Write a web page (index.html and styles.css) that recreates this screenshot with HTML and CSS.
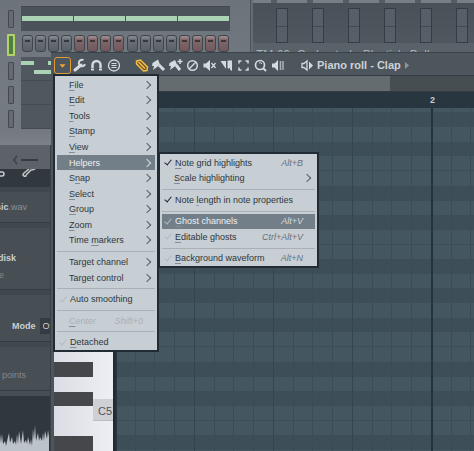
FILE: index.html
```html
<!DOCTYPE html>
<html lang="en">
<head>
<meta charset="utf-8">
<title>Piano roll - Clap</title>
<link rel="stylesheet" href="styles.css">
</head>
<body>
<main class="desktop">
  <section class="rack" aria-label="Channel rack">
    <div class="leds"><i></i><i class="on"></i><i></i><i></i><i></i></div>
    <div class="channels">
      <div class="preview"><b></b><b></b><b></b><b></b></div>
      <div class="steps">
        <i></i><i></i><i></i><i></i><i class="red"></i><i class="red"></i><i class="red"></i><i class="red"></i>
        <i></i><i></i><i></i><i></i><i class="red"></i><i class="red"></i><i class="red"></i><i class="red"></i>
      </div>
      <div class="lane notes">
        <svg width="60" height="23"><path d="M0 4h13v4H0zM27 4h13v4H27zM13 13h20v4H13z" fill="#a9d3b4"/></svg>
      </div>
      <div class="lane"></div>
      <div class="lane"></div>
    </div>
  </section>

  <section class="mixer" aria-label="Mixer">
    <div class="ruler-top"></div>
    <div class="faders"><i></i><i></i><i></i><i></i><i></i><i></i></div>
    <p class="route">TM 60 &nbsp;Orchestral - Plastic's Ballroom</p>
  </section>

  <section class="sampler" aria-label="Channel settings">
    <div class="scroller"><svg width="30" height="10"><path d="M5 1L2 5l3 4" fill="none" stroke="#3b4147" stroke-width="1.5"/><path d="M9 5h17" stroke="#353b40" stroke-width="2"/></svg></div>
    <div class="tabs">
      <svg width="50" height="18" fill="none" stroke="#c5cacf" stroke-width="1.5"><path d="M-2 3h4q2 0 2 2t-2 2h-4M24 4l5-4M26 6l5-5q3 0 5-2M24 4q-2 2 0 3t2-1"/></svg>
    </div>
    <div class="block file"><span><strong>music</strong>.wav</span></div>
    <div class="block options"><strong>Keep on disk</strong><span>Resample</span></div>
    <div class="block mode"><label for="mode">Mode</label><select id="mode"><option>Off</option></select></div>
    <div class="block points"><span>points</span></div>
    <svg class="wave" viewBox="0 0 50 55" preserveAspectRatio="none"><path d="M0 38l1 9 1-9 1 10 2-3 1 5 2-9 1-4 1 10 2-6 1 7 2-3 1 4 1-11 1 10 1-13 2 13 2-14 1 13 2-3 1 4 1-7 2 8 1-6 1 7 1-17 1 11 1-15 1 16 2-8 1 8 1-4 2 4 1-8 1 8 1-10 2 8 1-9 1 7V55H0z" fill="#bdc4c9"/></svg>
  </section>

  <section class="roll" aria-label="Piano roll">
    <header class="toolbar">
      <button class="tool open" aria-label="Menu"><svg viewBox="0 0 17 17"><path d="M5 7h7l-3.500 4z" fill="#f3a32f"/></svg></button>
      <button class="tool" aria-label="Tools"><svg viewBox="0 0 17 17"><path d="M4 13l6-5" stroke="#d4dade" stroke-width="3" stroke-linecap="round"/><path d="M12.500 3.200A3.200 3.200 0 1 0 14 7.200" fill="none" stroke="#d4dade" stroke-width="2"/></svg></button>
      <button class="tool" aria-label="Snap"><svg viewBox="0 0 17 17"><path d="M4.500 11V8a4 4 0 0 1 8 0v3" fill="none" stroke="#d4dade" stroke-width="2.500"/><path d="M3 12.500h3M11 12.500h3" stroke="#d4dade" stroke-width="2"/></svg></button>
      <button class="tool" aria-label="Stamp"><svg viewBox="0 0 17 17" fill="none" stroke="#d4dade"><circle cx="9" cy="8.500" r="5.500" stroke-width="1.300"/><path d="M6.500 6.500h5M6.500 8.500h5M6.500 10.500h5"/></svg></button>
      <button class="tool draw" aria-label="Draw"><svg viewBox="0 0 17 17"><path d="M3.500 4l4-1 7 7-.5 3.500-3.500.5-7-7z" fill="#765c28" stroke="#f2be49" stroke-width="1.500"/><path d="M5.500 5l6.500 6.500" stroke="#f2be49" stroke-width="1.500"/></svg></button>
      <button class="tool" aria-label="Paint"><svg viewBox="0 0 17 17" fill="#d4dade"><path d="M2.500 6L8 2.500l2 5L7 10l-4 3 1-4-2 0z"/><path d="M9 8l5 5" stroke="#d4dade" stroke-width="3"/></svg></button>
      <button class="tool" aria-label="Paint drums"><svg viewBox="0 0 17 17" fill="#d4dade"><path d="M2.500 6L8 3l2 4.500L7 10l-4 3 1-4-2 0z"/><path d="M9 8l4 5" stroke="#d4dade" stroke-width="3"/><path d="M13 2v5M10.500 4.500h5" stroke="#d4dade" stroke-width="1.500"/></svg></button>
      <button class="tool" aria-label="Delete"><svg viewBox="0 0 17 17" fill="none" stroke="#d4dade" stroke-width="1.500"><circle cx="8.500" cy="8.500" r="4.800"/><path d="M5 12l7-7"/></svg></button>
      <button class="tool" aria-label="Mute"><svg viewBox="0 0 17 17"><path d="M2.500 6.500h2.500L9 3v11L5 10.500H2.500z" fill="#d4dade"/><path d="M10.500 6l4 5M14.500 6l-4 5" stroke="#d4dade" stroke-width="1.300"/></svg></button>
      <button class="tool" aria-label="Slice"><svg viewBox="0 0 17 17" fill="#d4dade"><path d="M2.500 4H8v8zM9.500 3.500H14V14L9.500 11z"/><path d="M11.500 11v2" stroke="#505860"/></svg></button>
      <button class="tool" aria-label="Select"><svg viewBox="0 0 17 17" fill="none" stroke="#d4dade" stroke-width="1.500"><path d="M6.500 4H4v2.500M10.500 4H13v2.500M4 10.500V13h2.500M13 10.500V13h-2.500"/></svg></button>
      <button class="tool" aria-label="Zoom"><svg viewBox="0 0 17 17" fill="none" stroke="#d4dade"><circle cx="8" cy="8" r="4.500" stroke-width="1.700"/><path d="M11 11l3 3" stroke-width="2"/><path d="M7 6q2-1 3 1"/></svg></button>
      <button class="tool" aria-label="Play selection"><svg viewBox="0 0 17 17"><path d="M3 6.500h2.500L9 3v11L5.500 10.500H3z" fill="#d4dade"/><path d="M11.500 4v9M14 4v9" stroke="#aab1b7" stroke-width="1.500"/></svg></button>
      <button class="tool listen" aria-label="Audition"><svg viewBox="0 0 17 17"><path d="M4 6.500h2L9 4v9L6 10.500H4z" fill="none" stroke="#d4dade" stroke-width="1.300"/><path d="M11 4.500L15 8.500l-4 4z" fill="#d4dade"/></svg></button>
      <h1>Piano roll - Clap</h1>
      <svg class="more" width="5" height="7"><path d="M0 0l4 3.500-4 3.500z" fill="#8f979d"/></svg>
    </header>
    <div class="scroll"><i></i></div>
    <div class="timeline"><span>2</span></div>
    <div class="editor">
      <div class="keys"><span>C5</span></div>
      <div class="grid"></div>
    </div>
  </section>

  <nav class="menu main" aria-label="Piano roll menu">
    <button class="sub"><span><u>F</u>ile</span></button>
    <button class="sub"><span><u>E</u>dit</span></button>
    <button class="sub"><span><u>T</u>ools</span></button>
    <button class="sub"><span><u>S</u>tamp</span></button>
    <button class="sub"><span><u>V</u>iew</span></button>
    <button class="sub active"><span><u>H</u>elpers</span></button>
    <button class="sub"><span>S<u>n</u>ap</span></button>
    <button class="sub"><span><u>S</u>elect</span></button>
    <button class="sub"><span><u>G</u>roup</span></button>
    <button class="sub"><span><u>Z</u>oom</span></button>
    <button class="sub"><span>Time <u>m</u>arkers</span></button>
    <hr>
    <button class="sub"><span>Target channel</span></button>
    <button class="sub"><span>Target control</span></button>
    <hr>
    <button class="check"><span>Auto smoothing</span></button>
    <hr>
    <button disabled><span><u>C</u>enter</span><kbd>Shift+0</kbd></button>
    <hr>
    <button class="check"><span><u>D</u>etached</span></button>
  </nav>

  <nav class="menu helpers" aria-label="Helpers">
    <button class="check set"><span><u>N</u>ote grid highlights</span><kbd>Alt+B</kbd></button>
    <button class="sub"><span><u>S</u>cale highlighting</span></button>
    <hr>
    <button class="check set"><span>Note <u>l</u>ength in note properties</span></button>
    <hr>
    <button class="check active"><span><u>G</u>host channels</span><kbd>Alt+V</kbd></button>
    <button class="check"><span><u>E</u>ditable ghosts</span><kbd>Ctrl+Alt+V</kbd></button>
    <hr>
    <button class="check"><span><u>B</u>ackground waveform</span><kbd>Alt+N</kbd></button>
  </nav>
</main>
</body>
</html>
```

FILE: styles.css
```css
* { box-sizing: border-box; }

body {
  margin: 0;
  font: 9px/12px "Liberation Sans", Arial, sans-serif;
  color: #c8cdd1;
}

.desktop {
  position: relative;
  min-height: 100vh;
  overflow: hidden;
  background: #646b73;
}

button {
  font: inherit;
  color: inherit;
  border: 0;
  padding: 0;
  background: none;
}

/* channel rack */
.rack {
  position: absolute;
  top: 0;
  left: 0;
  width: 251px;
  height: 145px;
  display: flex;
  gap: 7px;
  padding: 6px 20px 0 7px;
  background: linear-gradient(#6d737b, #747b83 70%, #737980 90%, #7b8187);
  border-right: 1px solid #4c535b;
}

.leds {
  display: flex;
  flex-direction: column;
  align-items: center;
  gap: 6px;
  width: 7px;
  padding-top: 4px;
}

.leds i {
  width: 6px;
  height: 18px;
  border: 1px solid #43494f;
  border-radius: 1px;
  background: #646b71;
}

.leds .on {
  width: 8px;
  height: 22px;
  border: 2px solid #b4d266;
  background: #4e8046;
}

.channels { flex: 1; }

.preview {
  display: flex;
  gap: 1px;
  height: 25px;
  padding: 9px 1px;
  background: #4b5259;
  border-top: 1px solid #41474d;
}

.preview b {
  flex: 1;
  height: 5px;
  background: #a9d3b4;
}

.steps {
  display: flex;
  justify-content: space-between;
  padding: 4px 1px;
  height: 26px;
}

.steps i {
  width: 11px;
  height: 17px;
  border: 1px solid #40464c;
  border-radius: 3px;
  background: linear-gradient(#8c929799 2px, transparent 3px), linear-gradient(90deg, transparent 2px, #34393e 2px 7px, transparent 7px) 0 4px / 100% 2px no-repeat, linear-gradient(#6e757d, #596068);
}

.steps .red { background-image: linear-gradient(#aa979a99 2px, transparent 3px), linear-gradient(90deg, transparent 2px, #3f3437 2px 7px, transparent 7px), linear-gradient(#856d70, #70585c); }

.lane {
  height: 24px;
  background: #50575e;
  border-bottom: 1px solid #444b51;
}

.notes svg { display: block; }

/* mixer */
.mixer {
  position: absolute;
  top: 0;
  left: 253px;
  right: 0;
  height: 52px;
  overflow: hidden;
  background: #5a6269;
}

.ruler-top {
  height: 3px;
  background: repeating-linear-gradient(90deg, transparent 0 18px, #555c63 18px 24px, transparent 24px 36px), #777e84;
}

.faders {
  display: flex;
  gap: 24px;
  height: 40px;
  padding: 5px 0 0 23px;
  overflow: hidden;
  background: linear-gradient(#495158, #4f575f);
}

.faders i {
  flex: none;
  width: 12px;
  border: 1px solid #343c44;
  background: linear-gradient(transparent 17px, #424a51 17px 18px, transparent 18px), #565f67;
}

.route {
  margin: 0;
  padding: 6px 3px;
  font-size: 12px;
  white-space: nowrap;
  color: #a9b0b5;
}

/* channel settings */
.sampler {
  position: absolute;
  top: 145px;
  bottom: 0;
  left: 0;
  width: 51px;
  display: flex;
  flex-direction: column;
  overflow: hidden;
  background: #474e54;
  border-right: 1px solid #383f45;
}

.scroller {
  height: 24px;
  padding: 10px 0 0 12px;
  background: #5c6268;
}

.scroller svg, .tabs svg { display: block; }

.tabs {
  height: 18px;
  background: #31383e;
}

.block {
  display: flex;
  border-bottom: 1px solid #343b41;
  box-shadow: inset 0 5px #40474d;
}

.file {
  height: 36px;
  align-items: center;
  justify-content: flex-end;
  padding: 4px 23px 0 0;
  color: #8b9297;
}

.block strong, .block label {
  font-weight: bold;
  color: #c9ced2;
}

.options {
  flex-direction: column;
  align-items: flex-end;
  gap: 5px;
  height: 67px;
  padding: 29px 34px 0 0;
  white-space: nowrap;
}

.options span {
  padding-right: 12px;
  color: #82898e;
}

.mode {
  height: 52px;
  align-items: center;
  gap: 4px;
  padding: 20px 0 0 12px;
}

.mode select {
  flex: none;
  width: 30px;
  height: 16px;
  padding: 0 3px;
  border: 0;
  appearance: none;
  font: inherit;
  color: #c9ced2;
  background: #343b42;
}

.points {
  height: 49px;
  padding: 27px 0 0 2px;
  color: #82898e;
}

.wave {
  flex: 1;
  width: 100%;
  min-height: 0;
  margin-top: 5px;
  background: #30373e;
}

/* piano roll window */
.roll {
  position: absolute;
  top: 52px;
  right: 0;
  bottom: 0;
  left: 51px;
  display: flex;
  flex-direction: column;
  padding-left: 3px;
  background: #4d555d;
  border-top: 1px solid #3b4249;
}

.toolbar {
  display: flex;
  align-items: center;
  height: 22px;
  padding-top: 2px;
}

.tool {
  flex: none;
  width: 17px;
  height: 17px;
}

.tool svg {
  display: block;
  width: 100%;
  height: 100%;
}

.open svg {
  border: 1px solid #e09a3a;
  border-radius: 3px;
}

.draw { margin-left: 11px; }
.listen { margin-left: 12px; }

h1 {
  margin: 0 4px 0 2px;
  font-size: 10px;
  font-size: 11px;
  line-height: 12px;
  font-weight: bold;
  white-space: nowrap;
  color: #ccd2d6;
}

.scroll {
  height: 17px;
  border: solid #343c43;
  border-width: 1px 0;
  background: #474e52;
}

.scroll i {
  display: block;
  width: 80%;
  height: 100%;
  background: #646c70;
}

.timeline {
  height: 16px;
  padding: 2px 0 0 376px;
  font-weight: bold;
  background: #28363f;
}

.editor {
  flex: 1;
  display: flex;
  min-height: 0;
}

.keys {
  width: 61px;
  padding-top: 291px;
  border-right: 2px solid #202a31;
  background:
    repeating-linear-gradient(#45474a 0 15px, transparent 15px 30px, #45474a 30px 44px, transparent 44px 74px, #45474a 74px 89px, transparent 89px 103px, #45474a 103px 118px, transparent 118px 147px, #45474a 147px 162px, transparent 162px 176px) 0 78px / 39px 100% no-repeat,
    linear-gradient(90deg, #dcdde4, #eeeef5);
}

.keys span {
  display: block;
  height: 22px;
  margin-left: 39px;
  padding: 6px 1px 0 0;
  font-size: 11px;
  text-align: right;
  color: #50545a;
  background: #cfd0d6;
  border-bottom: 1px solid #b9bbc3;
}

.grid {
  flex: 1;
  background:
    repeating-linear-gradient(90deg, #24343f 0 2px, transparent 2px 79px, #324550 79px 80px, transparent 80px 158px, #324550 158px 159px, transparent 159px 237px, #324550 237px 238px, transparent 238px 316px),
    repeating-linear-gradient(90deg, transparent 0 20px, #394c58 20px 21px, transparent 21px 39px, #394c58 39px 40px, transparent 40px 59px, #394c58 59px 60px, transparent 60px 79px),
    repeating-linear-gradient(#445660 0 4px, #3d4e58 4px 19px, #445660 19px 34px, #3d4e58 34px 48px, #445660 48px 62px, #3c4e59 62px 63px, #445660 63px 78px, #3d4e58 78px 93px, #445660 93px 107px, #3d4e58 107px 122px, #445660 122px 136px, #3c4e59 136px 137px, #445660 137px 151px, #3d4e58 151px 166px, #445660 166px 176px);
}

/* popup menus */
.menu {
  position: absolute;
  display: flex;
  flex-direction: column;
  border: 2px solid #202b33;
  padding: 1px 2px 0;
  color: #30363b;
  background: #c7ced4;
}

.main {
  top: 74px;
  left: 53px;
  width: 106px;
  height: 278px;
}

.helpers {
  top: 152px;
  left: 158px;
  width: 161px;
  height: 116px;
}

.menu button {
  flex: 1;
  display: flex;
  align-items: center;
  min-height: 0;
  padding: 0 12px;
  white-space: nowrap;
}

.menu hr {
  width: 100%;
  height: 6px;
  margin: 0;
  border: solid transparent;
  border-width: 3px 0 2px;
  background: #a9b1b7 padding-box;
}

.menu u {
  text-decoration-color: #858c92;
  text-underline-offset: 2px;
}

.menu kbd {
  margin-left: auto;
  font: inherit;
  font-style: italic;
  color: #6a7177;
}

.menu .sub { padding-right: 5px; }

.menu .sub::after {
  content: "";
  width: 5px;
  height: 5px;
  margin-left: auto;
  border: solid #596066;
  border-width: 1px 1px 0 0;
  transform: rotate(45deg);
}

.menu .check { padding-left: 2px; }

.menu .check::before {
  content: "";
  flex: none;
  width: 3px;
  height: 6px;
  margin: 0 5px 2px 2px;
  border: solid #b2babf;
  border-width: 0 1px 1px 0;
  transform: rotate(40deg);
}

.menu .set::before { border-color: #22282d; }

.menu .active {
  color: #edf1f3;
  background: #727f89;
}

.menu .active kbd { color: #d5dade; }
.menu .active::after { border-color: #d5dade; }

.menu :disabled, .menu :disabled kbd { color: #aab1b7; }
```
